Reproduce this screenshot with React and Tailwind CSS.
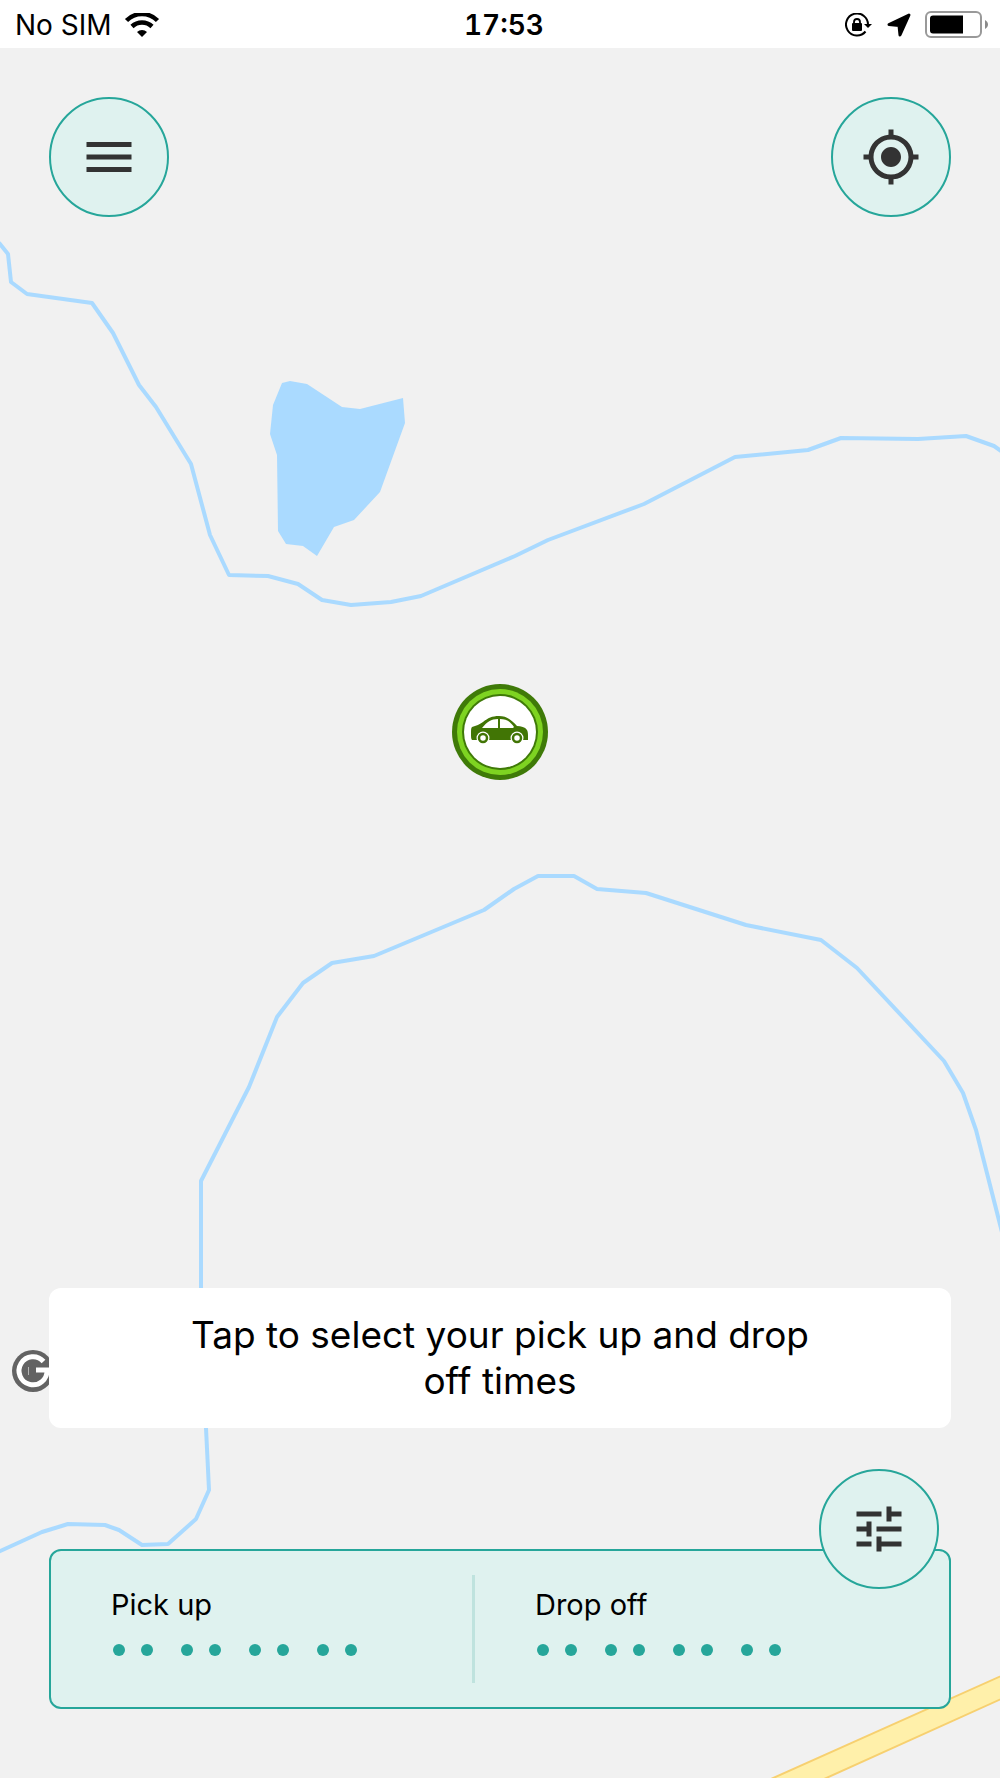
import React from 'react';
import { MdMenu, MdMyLocation, MdTune } from 'react-icons/md';

const WATER = '#aadaff';

const MapCanvas = () => (
  <svg
    className="absolute inset-0 h-full w-full"
    viewBox="0 48 1000 1730"
    preserveAspectRatio="xMidYMid slice"
    fill="none"
    aria-hidden="true"
  >
    {/* Lake */}
    <path
      fill={WATER}
      d="M282 383l8-2 17 3 35 23 18 2 43-11 2 25-25 69-26 28-20 7-17 29-14-10-17-2-8-13-1-76-7-21 3-29z"
    />
    {/* Rivers */}
    <g stroke={WATER} strokeWidth="4" strokeLinejoin="round">
      <polyline points="-4,240 0,244 8,254 11,282 27,294 92,303 113,333 139,385 156,407 191,464 210,535 229,575 268,576 298,584 322,600 351,605 391,602 421,596 515,556 548,540 644,504 735,457 808,450 841,438 918,439 966,436 994,446 1004,453" />
      <polyline points="-4,1553 42,1532 68,1524 105,1525 119,1530 142,1545 168,1544 196,1519 209,1490 206,1428 201,1300 201,1181 249,1087 277,1017 303,983 332,963 374,956 484,910 514,889 538,876 574,876 597,889 646,893 746,925 821,940 857,968 944,1061 963,1093 976,1130 1004,1240" />
    </g>
    {/* Road */}
    <path d="M762 1783L1010 1672V1695L813 1784z" fill="#fff0aa" stroke="#f7d070" strokeWidth="2" />
  </svg>
);

const GoogleMark = () => (
  <svg className="h-11 w-11" viewBox="0 0 44 44" fill="none" aria-label="Google">
    <circle cx="21" cy="21" r="21" fill="#636363" />
    <path d="M31.500 11.500A14 14 0 1 0 35 20H24" stroke="#fff" strokeWidth="5" />
    <path d="M16.500 17V25" stroke="#b5b5b5" strokeWidth="1" />
  </svg>
);

const CarMarker = () => (
  <svg className="h-24 w-24" viewBox="0 0 96 96" role="img" aria-label="Car">
    <circle cx="48" cy="48" r="48" fill="#3f7a08" />
    <circle cx="48" cy="48" r="43" fill="#7ed321" />
    <circle cx="48" cy="48" r="38" fill="#3f7a08" />
    <circle cx="48" cy="48" r="36" fill="#fff" />
    <path
      fill="#417505"
      d="M20 43c4-1 8-3 11-5 5-4 9-6 16-6 7 0 12 3 18 10 4 0 8 1 10 4 1 2 1 4 1 7v3H20c-1-1-1-3-1-7 0-3 0-5 1-6z"
    />
    <path fill="#fff" d="M30 44c5-6 9-9 16-9v9zM48 35c6 0 10 2 14 8l-1 1H48z" />
    <circle cx="31" cy="54" r="6.500" fill="#fff" />
    <circle cx="65" cy="54" r="6.500" fill="#fff" />
    <circle cx="31" cy="54" r="4" fill="#fff" stroke="#417505" strokeWidth="2.500" />
    <circle cx="65" cy="54" r="4" fill="#fff" stroke="#417505" strokeWidth="2.500" />
  </svg>
);

const WifiIcon = () => (
  <svg className="h-6 w-9" viewBox="0 0 36 24" fill="none" aria-hidden="true">
    <path d="M2.500 7.500a22 22 0 0 1 31 0" stroke="#000" strokeWidth="4.500" />
    <path d="M8 13.500a14.500 14.500 0 0 1 20 0" stroke="#000" strokeWidth="4.500" />
    <path d="M18 24l-5-5a7.500 7.500 0 0 1 10 0z" fill="#000" />
  </svg>
);

const RotationLockIcon = () => (
  <svg className="h-6 w-7" viewBox="0 0 28 24" fill="none" aria-hidden="true">
    <path d="M20.500 18.500A11 11 0 1 1 23 12" stroke="#000" strokeWidth="2" />
    <path d="M19 11h8l-4 4z" fill="#000" />
    <rect x="7" y="10" width="10" height="8" rx="1" fill="#000" />
    <path d="M9 11V9a3 3 0 0 1 6 0v2" stroke="#000" strokeWidth="1.800" />
  </svg>
);

const LocationArrowIcon = () => (
  <svg className="h-6 w-6" viewBox="0 0 24 24" aria-hidden="true">
    <path
      d="M22 2L2 11.500l10 1L13 22z"
      fill="#000"
      stroke="#000"
      strokeWidth="3"
      strokeLinejoin="round"
    />
  </svg>
);

const BatteryIcon = () => (
  <svg className="h-7 w-16" viewBox="0 0 64 28" fill="none" aria-hidden="true">
    <rect x="1" y="1" width="55" height="25" rx="5" stroke="#999" strokeWidth="2" />
    <path d="M8 4.500h30v18H8a3 3 0 0 1-3-3v-12a3 3 0 0 1 3-3z" fill="#000" />
    <path d="M60 9c4 2 4 7 0 9z" fill="#8a8a8a" />
  </svg>
);

const StatusBar = () => (
  <header className="relative z-10 grid h-12 grid-cols-3 items-center bg-white pl-[15px] pr-[11px] pt-0.5">
    <div className="flex items-center gap-3">
      <span className="text-[28px] leading-8">No SIM</span>
      <WifiIcon />
    </div>
    <time className="pl-1 text-center text-[28px] font-semibold leading-8 tabular-nums">17:53</time>
    <div className="flex items-center justify-end gap-3.5">
      <RotationLockIcon />
      <LocationArrowIcon />
      <BatteryIcon />
    </div>
  </header>
);

const RoundButton = ({ label, children }) => (
  <button
    type="button"
    aria-label={label}
    className="flex size-[120px] items-center justify-center rounded-full border-2 border-[#26a69a] bg-[#dff2ef] text-[#333333]"
  >
    {children}
  </button>
);

const PlaceholderDots = () => (
  <span className="mt-[19px] flex gap-7 pl-0.5" aria-hidden="true">
    {[0, 1, 2, 3].map((pair) => (
      <span key={pair} className="flex gap-4">
        <span className="size-3 rounded-full bg-[#26a69a]" />
        <span className="size-3 rounded-full bg-[#26a69a]" />
      </span>
    ))}
  </span>
);

const TimeField = ({ label }) => (
  <button type="button" className="pb-[27px] pl-[60px] pt-2.5 text-left">
    <span className="block text-[29px] leading-10">{label}</span>
    <PlaceholderDots />
  </button>
);

const App = () => (
  <div className="flex min-h-screen flex-col bg-[#f1f1f1] font-['Inter',sans-serif] text-black">
    <StatusBar />
    <main className="relative flex flex-1 flex-col overflow-hidden px-[49px] pb-[69px] pt-[49px]">
      <MapCanvas />
      <div className="absolute left-1/2 top-[684px] -translate-x-1/2 -translate-y-1/2">
        <CarMarker />
      </div>

      <div className="relative flex justify-between">
        <RoundButton label="Menu">
          <MdMenu size={60} />
        </RoundButton>
        <RoundButton label="My location">
          <MdMyLocation size={60} />
        </RoundButton>
      </div>

      <div className="relative mt-auto">
        <div className="absolute -left-[37px] top-[62px]">
          <GoogleMark />
        </div>
        <p className="relative rounded-xl bg-white px-32 py-6 text-center text-[37px] leading-[46px]">
          Tap to select your pick up and drop off times
        </p>
      </div>

      <div className="relative mt-[121px] rounded-xl border-2 border-[#26a69a] bg-[#dff2ef] py-6 pr-[50px]">
        <div className="grid grid-cols-2 divide-x-3 divide-[#bfe3de]">
          <TimeField label="Pick up" />
          <TimeField label="Drop off" />
        </div>
        <div className="absolute -top-[82px] right-2.5">
          <RoundButton label="Filters">
            <MdTune size={60} />
          </RoundButton>
        </div>
      </div>
    </main>
  </div>
);

export default App;
